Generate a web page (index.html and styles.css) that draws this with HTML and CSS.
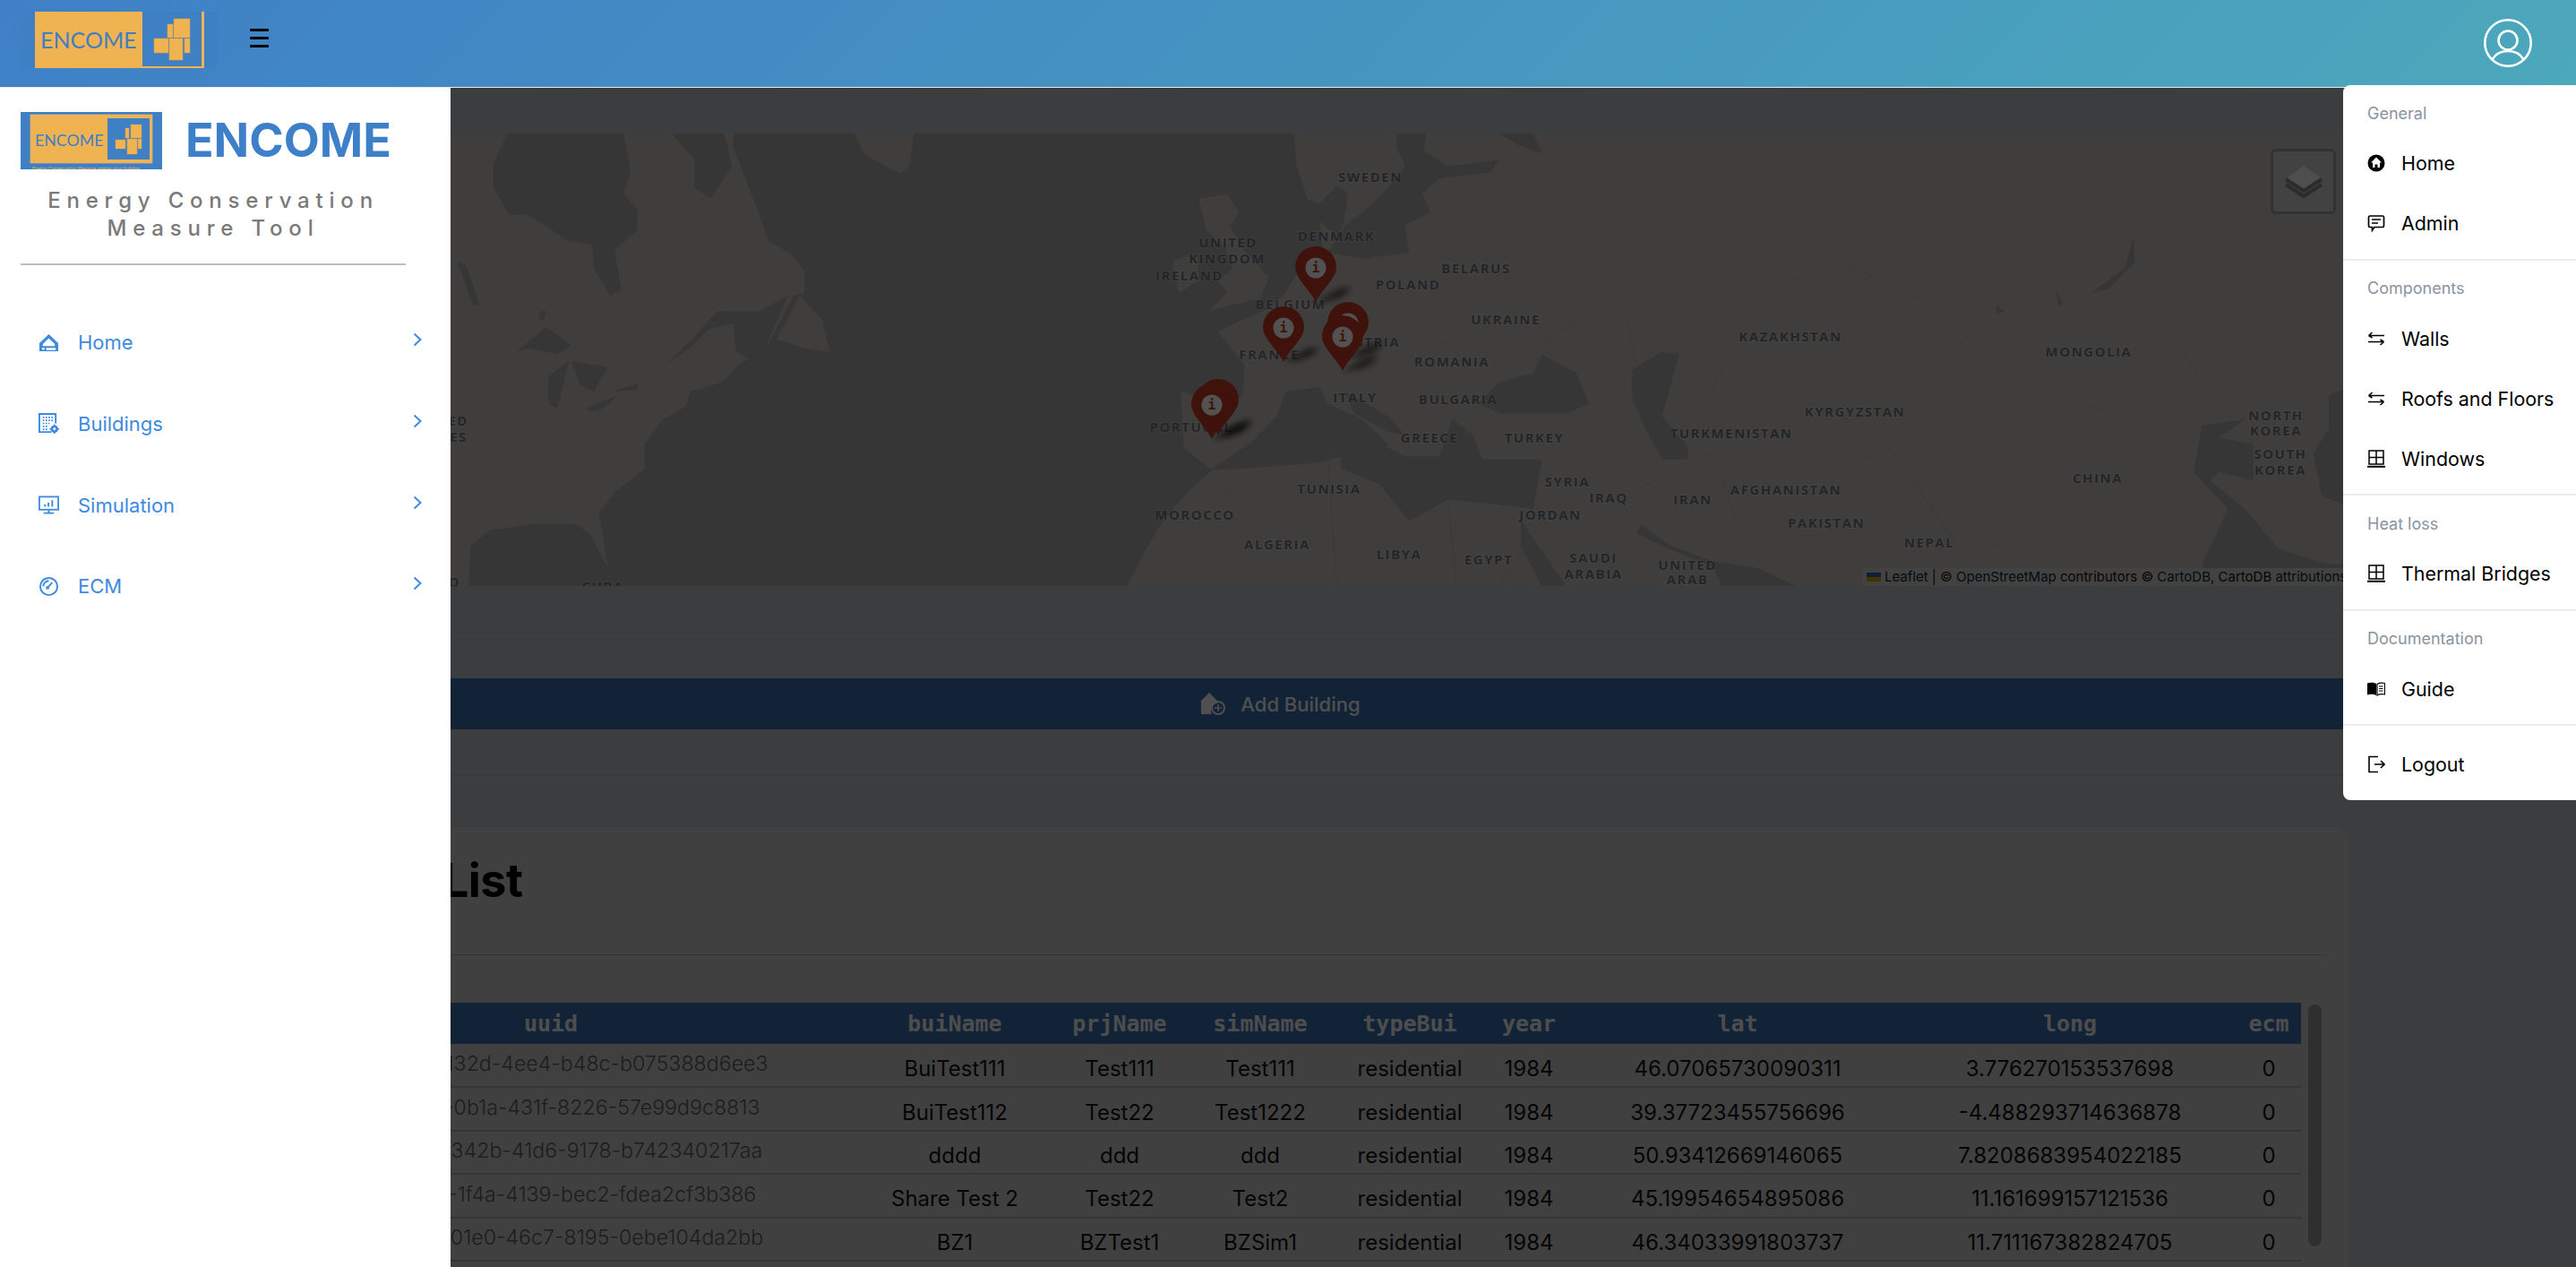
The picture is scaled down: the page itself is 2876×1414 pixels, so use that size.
FILE: index.html
```html
<!DOCTYPE html>
<html lang="en">
<head>
<meta charset="utf-8">
<title>ENCOME</title>
<link rel="stylesheet" href="styles.css">
</head>
<body>
<header class="topbar">
  <div class="topbar-left">
    <svg class="top-logo" viewBox="0 0 220 63">
      <rect width="220" height="63" fill="#3f7fc4"/>
      <rect x="16" width="189" height="63" fill="#f0b351"/>
      <rect x="136" width="66" height="61" fill="#3f7fc4"/>
      <text x="22" y="41" class="top-logo-text">ENCOME</text>
      <g fill="#f0b351" stroke="#d9a34f" stroke-width=".5">
        <rect x="171" y="8" width="18" height="21"/><rect x="164" y="14" width="6" height="15"/><rect x="149" y="30" width="16" height="16"/><rect x="166" y="30" width="15" height="24"/><rect x="183" y="30" width="6" height="16"/>
      </g>
    </svg>
    <div class="burger"><span></span><span></span><span></span></div>
  </div>
  <svg class="avatar" viewBox="0 0 56 56" fill="none" stroke="#fff" stroke-width="2.6">
    <circle cx="28" cy="28" r="25.7"/><circle cx="28" cy="25" r="10.5"/><path d="M10.5 46.5C14 40 20 37 28 37s14 3 17.5 9.5"/>
  </svg>
</header>

<main class="page">
  <section class="map">
    <svg class="map-svg" viewBox="24 149 2598 505" preserveAspectRatio="none">
      <defs>
        <filter id="soft" x="-30%" y="-30%" width="160%" height="160%"><feGaussianBlur stdDeviation="3.5"/></filter>
        <g id="pin">
          <path d="M23 62C36 56 48 44 62 46 58 56 40 62 23 62Z" fill="#000" opacity=".6" filter="url(#soft)"/>
          <path d="M23 62C17 49 0 36 0 23A23 23 0 0 1 46 23C46 36 29 49 23 62Z" fill="#c53b26"/>
          <circle cx="23" cy="24" r="11.5" fill="#fff"/>
          <text x="23" y="29" class="pin-i">i</text>
        </g>
      </defs>
      <rect x="24" y="149" width="2598" height="505" class="water"/>
      <g transform="translate(500 120) scale(.5102 .3445)">
        <path class="land" d="M-600 84H130L100 180 100 260 135 350 170 345 220 390 265 435 315 445 320 520 355 610 380 590 365 460 415 400 415 330 385 280 400 210 385 84H490L540 170 540 260 575 295 622 190 605 84H625L625 130 680 340 700 430 755 480 780 530 780 600 730 620 755 610 700 770 640 830 600 890 530 920 520 970 470 1010 430 1090 430 1170 370 1240 330 1310 350 1490 310 1380 280 1350 180 1350 90 1370 50 1420 45 1550H-600Z"/>
        <path class="land" d="M890 84H1020L1010 190 990 215 910 150Z"/>
        <path class="water" d="M590 660 680 660 745 610 700 760 680 830 630 790 625 700 570 720 530 780 480 830 540 740Z"/>
        <path class="land" d="M770 610 820 690 835 790 780 780 720 750Z"/>
        <path class="water" d="M150 790 215 710 270 770 240 800 180 780ZM220 870 265 820 240 975 220 960ZM270 820 350 840 320 920 290 900ZM300 975 370 935 340 975 310 985ZM365 915 415 895 415 915 370 920ZM20 500 40 510 70 640 55 640ZM200 660 215 660 210 690 200 685Z"/>
        <path class="border" d="M5 705H90L150 745M10 900 70 950 100 1060 175 1080 195 1135 155 1300"/>
      </g>
      <path class="land" d="M1445 149H2640V654H1258L1280 612 1296 585 1325 550 1353 525 1345 518 1322 500 1318 437 1345 445 1387 443 1390 407 1360 370 1387 357 1415 345 1433 330 1447 307 1477 280 1473 247 1493 263 1500 250 1505 215 1493 207 1473 227 1460 223 1447 183Z"/>
      <g transform="translate(1260 150) scale(.3333)">
        <path class="land" d="M235 215 330 200 370 260 340 310 390 390 470 480 440 550 350 570 270 590 330 530 300 490 350 450 325 380 260 320Z"/>
        <path class="land" d="M150 420 230 400 235 490 170 530 150 470Z"/>
      </g>
      <g transform="translate(1100 120) scale(.9566 .3445)">
        <path class="water" d="M480 84H515L512 140 540 190 600 170 590 210 530 230 510 280 520 340 490 380 495 470 440 490 400 470 420 380 440 340 470 260 490 190 480 130ZM600 84H640L650 150 620 120Z"/>
        <path class="water" d="M575 960 600 890 640 860 650 800 690 860 705 960 680 990 600 990Z"/>
        <path class="water" d="M755 850 790 790 810 800 800 900 790 1000 820 1100 820 1140 790 1140 770 1040 755 940Z"/>
        <path class="water" d="M262 1175 310 1085 340 1000 350 920 390 905 400 960 440 1010 470 1090 455 1140 420 1130 390 1150 300 1170Z"/>
        <path class="water" d="M420 920 470 1000 490 1060 470 1050 430 990Z"/>
        <path class="water" d="M415 1135 470 1100 490 1130 530 1130 545 1010 570 1060 580 1140 650 1140 640 1300 540 1270 495 1340 460 1220 415 1170Z"/>
        <path class="water" d="M625 1330 640 1400 680 1555 650 1555 625 1420ZM765 1350 800 1420 850 1470 900 1490 950 1555 860 1555 850 1490 790 1420 760 1380Z"/>
        <path class="water" d="M1340 420 1330 520 1290 600 1310 590 1342 500ZM1250 590 1258 640 1252 640ZM1180 640 1190 660 1180 670Z"/>
        <path class="water" d="M1420 1030 1470 1010 1440 1070 1480 1090 1480 1210 1440 1180 1430 1210 1470 1300 1510 1430 1568 1480 1700 1480 1700 1560H1430L1420 1480 1450 1300 1410 1180Z"/>
        <path class="water" d="M1568 930 1700 800V1400L1560 1260 1550 1120 1568 1040Z"/>
        <path class="border" d="M440 490 530 480 620 560 690 690 640 790M330 800 420 790 500 790 570 740M750 700 800 590 890 640 990 490 1120 660 1250 590 1410 710M750 700 760 830M860 850 840 960 930 920 1040 950 1180 680M1170 780 1300 980 1420 890 1400 800M1000 1000 1060 1120 1130 1400 1230 1440M760 1240 840 1120 880 1180 960 1170 1040 1130M860 1200 880 1380M240 1290 400 1130M400 1130 410 1550M540 1270 550 1550M650 1340 600 1550"/>
      </g>
      <g class="map-labels">
        <text x="1530" y="203">SWEDEN</text><text x="1492" y="269">DENMARK</text><text x="1371" y="276">UNITED</text><text x="1370" y="294">KINGDOM</text><text x="1328" y="313">IRELAND</text><text x="1648" y="305">BELARUS</text><text x="1572" y="323">POLAND</text><text x="1441" y="345">BELGIUM</text><text x="1681" y="362">UKRAINE</text><text x="1417" y="401">FRANCE</text><text x="1526" y="387">AUSTRIA</text><text x="1621" y="409">ROMANIA</text><text x="1999" y="381">KAZAKHSTAN</text><text x="2332" y="398">MONGOLIA</text><text x="1513" y="449">ITALY</text><text x="1628" y="451">BULGARIA</text><text x="2071" y="465">KYRGYZSTAN</text><text x="1933" y="489">TURKMENISTAN</text><text x="1330" y="482">PORTUGAL</text><text x="1596" y="494">GREECE</text><text x="1713" y="494">TURKEY</text><text x="2541" y="469">NORTH</text><text x="2541" y="486">KOREA</text><text x="2546" y="512">SOUTH</text><text x="2546" y="530">KOREA</text><text x="2342" y="539">CHINA</text><text x="1750" y="543">SYRIA</text><text x="1484" y="551">TUNISIA</text><text x="1796" y="561">IRAQ</text><text x="1890" y="563">IRAN</text><text x="1994" y="552">AFGHANISTAN</text><text x="1731" y="580">JORDAN</text><text x="1334" y="580">MOROCCO</text><text x="2039" y="589">PAKISTAN</text><text x="2154" y="611">NEPAL</text><text x="1426" y="613">ALGERIA</text><text x="1562" y="624">LIBYA</text><text x="1662" y="630">EGYPT</text><text x="1779" y="628">SAUDI</text><text x="1779" y="646">ARABIA</text><text x="1884" y="636">UNITED</text><text x="1884" y="652">ARAB</text><text x="490" y="475">UNITED</text><text x="491" y="493">STATES</text><text x="480" y="655">MEXICO</text><text x="673" y="660">CUBA</text>
      </g>
      <use href="#pin" x="1446" y="275"/>
      <use href="#pin" x="1410" y="342"/>
      <use href="#pin" x="1482" y="337"/>
      <use href="#pin" x="1476" y="352"/>
      <use href="#pin" x="1337" y="423"/>
      <use href="#pin" x="1330" y="428"/>
    </svg>
    <div class="layers-btn">
      <svg viewBox="0 0 44 44"><path d="M22 4 42 18 22 31 2 18Z" fill="#f2f2f2"/><path d="M2 25 22 38 42 25" fill="none" stroke="#8a8a8a" stroke-width="4"/><path d="M2 19 22 32 42 19" fill="none" stroke="#8a8a8a" stroke-width="4"/></svg>
    </div>
    <div class="attribution"><span class="flag"></span><a>Leaflet</a> | © <a>OpenStreetMap</a> contributors © <a>CartoDB</a>, CartoDB <a>attributions</a></div>
  </section>

  <hr class="rule">
  <div class="add-bar">
    <svg class="add-icon" viewBox="0 0 27 25"><path d="M9 0 18 9V12A8 8 0 0 0 12 24H0V9Z" fill="currentColor"/><circle cx="19" cy="17" r="7" fill="none" stroke="currentColor" stroke-width="2"/><path d="M19 13V21M15 17H23" stroke="currentColor" stroke-width="1.6"/></svg>
    <span>Add Building</span>
  </div>
  <hr class="rule rule-low">

  <section class="card">
    <h1 class="card-title">Building List</h1>
    <hr class="card-rule">
    <div class="table-wrap">
      <table class="data">
        <colgroup><col class="c0"><col class="c1"><col class="c2"><col class="c3"><col class="c4"><col class="c5"><col class="c6"><col class="c7"><col class="c8"><col class="c9"></colgroup>
        <thead><tr><th></th><th>uuid</th><th>buiName</th><th>prjName</th><th>simName</th><th>typeBui</th><th>year</th><th>lat</th><th>long</th><th>ecm</th></tr></thead>
        <tbody>
          <tr><td>1</td><td class="uuid">00000000-132d-4ee4-b48c-b075388d6ee3</td><td>BuiTest111</td><td>Test111</td><td>Test111</td><td>residential</td><td>1984</td><td>46.07065730090311</td><td>3.776270153537698</td><td>0</td></tr>
          <tr><td>2</td><td class="uuid">00000000-0b1a-431f-8226-57e99d9c8813</td><td>BuiTest112</td><td>Test22</td><td>Test1222</td><td>residential</td><td>1984</td><td>39.37723455756696</td><td>-4.488293714636878</td><td>0</td></tr>
          <tr><td>3</td><td class="uuid">00000000-342b-41d6-9178-b742340217aa</td><td>dddd</td><td>ddd</td><td>ddd</td><td>residential</td><td>1984</td><td>50.93412669146065</td><td>7.8208683954022185</td><td>0</td></tr>
          <tr><td>4</td><td class="uuid">00000000-1f4a-4139-bec2-fdea2cf3b386</td><td>Share Test 2</td><td>Test22</td><td>Test2</td><td>residential</td><td>1984</td><td>45.19954654895086</td><td>11.161699157121536</td><td>0</td></tr>
          <tr><td>5</td><td class="uuid">00000000-01e0-46c7-8195-0ebe104da2bb</td><td>BZ1</td><td>BZTest1</td><td>BZSim1</td><td>residential</td><td>1984</td><td>46.34033991803737</td><td>11.711167382824705</td><td>0</td></tr>
        </tbody>
      </table>
      <div class="scroll-thumb"></div>
    </div>
  </section>
</main>

<div class="dim"></div>

<aside class="sidebar">
  <div class="brand">
    <svg class="side-logo" viewBox="0 0 158 64">
      <rect width="158" height="64" fill="#3f7fc4"/>
      <rect x="11" y="3" width="136" height="54" fill="#f0b351" stroke="#d9b27a" stroke-width=".8"/>
      <rect x="97" y="7" width="47" height="46" fill="#3f7fc4"/>
      <text x="16" y="38" class="side-logo-text">ENCOME</text>
      <g fill="#f0b351" stroke="#d9a34f" stroke-width=".4">
        <rect x="123" y="14" width="12" height="15"/><rect x="117" y="18" width="4" height="11"/><rect x="106" y="31" width="11" height="10"/><rect x="119" y="30" width="11" height="17"/><rect x="131" y="30" width="4" height="11"/>
      </g>
      <text x="13" y="65" class="side-logo-tiny">Energy Conservation Measure makes your building</text>
    </svg>
    <div class="brand-name">ENCOME</div>
  </div>
  <p class="brand-sub">Energy Conservation Measure Tool</p>
  <hr class="side-rule">
  <nav class="side-nav">
    <a class="side-item">
      <span class="side-icon"><svg viewBox="0 0 24 24"><path d="M12 2 23 12.500V22H1V12.500ZM12 6.800 5 13.500V16H19V13.500ZM7 18 4 18V20H7ZM9 18V20.500H20V18Z" fill="currentColor" fill-rule="evenodd"/></svg></span>
      <span class="side-text">Home</span>
      <svg class="chev" viewBox="0 0 10 16"><path d="M1.500 1.500 8.500 8 1.500 14.500"/></svg>
    </a>
    <a class="side-item">
      <span class="side-icon"><svg viewBox="0 0 24 24" fill="none" stroke="currentColor"><path d="M15 22H1V1H20V12" stroke-width="2"/><path d="M5 5H17M5 8.500H17M5 12H13M5 15.500H11M5 19H11" stroke-width="1.800" stroke-dasharray="1.800 1.500"/><circle cx="18.500" cy="18.500" r="3" stroke-width="3"/><path d="M18.500 13V24M13 18.500H24" stroke-width="1.500" stroke-dasharray="2 7"/></svg></span>
      <span class="side-text">Buildings</span>
      <svg class="chev" viewBox="0 0 10 16"><path d="M1.500 1.500 8.500 8 1.500 14.500"/></svg>
    </a>
    <a class="side-item">
      <span class="side-icon"><svg viewBox="0 0 24 24" fill="none" stroke="currentColor" stroke-width="1.900"><rect x="1" y="2.500" width="22" height="15"/><path d="M12 17.500V21M6 21.500H18M7.500 14V11.500M11.500 14V9.500M16 14V6.500" stroke-width="2"/></svg></span>
      <span class="side-text">Simulation</span>
      <svg class="chev" viewBox="0 0 10 16"><path d="M1.500 1.500 8.500 8 1.500 14.500"/></svg>
    </a>
    <a class="side-item">
      <span class="side-icon"><svg viewBox="0 0 24 24" fill="none" stroke="currentColor" stroke-width="2"><circle cx="12" cy="12" r="10"/><path d="M5.500 12A6.500 6.500 0 0 1 12 5.500M11 13 16 7.500" stroke-width="2"/><circle cx="10.500" cy="13.500" r="2" fill="currentColor" stroke="none"/></svg></span>
      <span class="side-text">ECM</span>
      <svg class="chev" viewBox="0 0 10 16"><path d="M1.500 1.500 8.500 8 1.500 14.500"/></svg>
    </a>
  </nav>
</aside>

<div class="menu">
  <div class="menu-group">
    <div class="menu-label">General</div>
    <a class="menu-item"><svg viewBox="0 0 20 20"><circle cx="10" cy="10" r="9.500" fill="#000"/><path d="M10 3.500 16 9.500H14V15H11.500V11.500H8.500V15H6V9.500H4Z" fill="#fff"/></svg><span>Home</span></a>
    <a class="menu-item"><svg viewBox="0 0 20 20" fill="none" stroke="#000" stroke-width="1.700"><path d="M3 2H17A1.500 1.500 0 0 1 18.500 3.500V13A1.500 1.500 0 0 1 17 14.500H8L5.500 18V14.500H3A1.500 1.500 0 0 1 1.500 13V3.500A1.500 1.500 0 0 1 3 2Z"/><path d="M5 6H15M5 10H12"/></svg><span>Admin</span></a>
  </div>
  <div class="menu-group">
    <div class="menu-label">Components</div>
    <a class="menu-item"><svg viewBox="0 0 20 20" fill="none" stroke="#000" stroke-width="1.500"><path d="M1.500 6.500H19M1.500 6.500 5.500 3M1.500 6.500 5.500 9M1 13.500H18.500M18.500 13.500 14.500 11M18.500 13.500 14.500 17"/></svg><span>Walls</span></a>
    <a class="menu-item"><svg viewBox="0 0 20 20" fill="none" stroke="#000" stroke-width="1.500"><path d="M1.500 6.500H19M1.500 6.500 5.500 3M1.500 6.500 5.500 9M1 13.500H18.500M18.500 13.500 14.500 11M18.500 13.500 14.500 17"/></svg><span>Roofs and Floors</span></a>
    <a class="menu-item"><svg viewBox="0 0 20 20" fill="none" stroke="#000" stroke-width="1.500"><path d="M2 1H18V16H2ZM10 1V16M2 8.500H18"/><path d="M0 18.800H20" stroke-width="2"/></svg><span>Windows</span></a>
  </div>
  <div class="menu-group">
    <div class="menu-label">Heat loss</div>
    <a class="menu-item"><svg viewBox="0 0 20 20" fill="none" stroke="#000" stroke-width="1.500"><path d="M2 1H18V16H2ZM10 1V16M2 8.500H18"/><path d="M0 18.800H20" stroke-width="2"/></svg><span>Thermal Bridges</span></a>
  </div>
  <div class="menu-group">
    <div class="menu-label">Documentation</div>
    <a class="menu-item"><svg viewBox="0 0 20 20"><path d="M0 3.500C3 2.500 7 2.500 10 4V17C7 15.500 3 15.500 0 16.500Z" fill="#000"/><path d="M11 4.500C13.500 3 16.500 3 19.500 3.500V16C16.500 15.500 13.500 15.500 11 17Z" fill="none" stroke="#000" stroke-width="1.200"/><path d="M13 7H17.500M13 9.500H17.500M13 12H17.500" stroke="#000" stroke-width="1.200"/></svg><span>Guide</span></a>
  </div>
  <div class="menu-group menu-group-last">
    <a class="menu-item"><svg viewBox="0 0 20 20" fill="none" stroke="#000" stroke-width="1.600"><path d="M12 1.500H2V18.500H12M8 10H19M15 6 19 10 15 14"/></svg><span>Logout</span></a>
  </div>
</div>
</body>
</html>
```

FILE: styles.css
```css
* { box-sizing: border-box; }
html, body { margin: 0; height: 1414px; overflow: hidden; }
body { font-family: Inter, "Liberation Sans", sans-serif; background: #bcbfc5; position: relative; color: #000; }

/* top bar */
.topbar { position: relative; z-index: 30; height: 98px; display: flex; justify-content: space-between; padding: 13px 48px 0 23px;
  background: linear-gradient(135deg, #3f80c7 0%, #4ca8bb 100%); border-bottom: 1px solid #e8eaee; }
.topbar-left { display: flex; align-items: flex-start; }
.top-logo { width: 220px; height: 63px; display: block; }
.top-logo-text { font-family: Lato, sans-serif; font-size: 25px; fill: #3f7fc4; }
.burger { margin: 19px 0 0 36px; width: 21px; display: flex; flex-direction: column; gap: 6.500px; }
.burger span { display: block; height: 2.500px; background: #000; border-radius: 1px; }
.avatar { width: 56px; height: 56px; margin-top: 7px; }

/* page under the scrim */
.page { padding: 51px 254px 0 24px; }
.map { position: relative; height: 505px; overflow: hidden; }
.map-svg { width: 100%; height: 100%; display: block; }
.water { fill: #a6a9a6; }
.land { fill: #c5c2bc; }
.border { fill: none; stroke: #b4b2ac; stroke-width: 1.200; }
.map-labels text { font-family: "Open Sans", sans-serif; font-weight: 700; font-size: 15px; text-anchor: middle; letter-spacing: 1.500px; fill: #6e747e; stroke: rgba(255,255,255,.25); stroke-width: 2px; paint-order: stroke; }
.pin-i { font-family: "DejaVu Sans Mono", monospace; font-weight: 700; font-size: 15px; text-anchor: middle; fill: #c53b26; }
.layers-btn { position: absolute; top: 17px; right: 14px; width: 73px; height: 73px; background: #cdcdcd; border: 3px solid #9c9c9c; border-radius: 6px; display: flex; align-items: center; justify-content: center; }
.layers-btn svg { width: 44px; height: 44px; }
.attribution { position: absolute; right: 0; bottom: 0; height: 20px; padding: 0 4px 0 4px; width: 542px; background: #cfcdc8; font-size: 15px; line-height: 20px; color: #111; white-space: nowrap; overflow: hidden; }
.attribution a { color: #002d40; }
.flag { display: inline-block; width: 16px; height: 10px; margin-right: 4px; background: linear-gradient(#3a5fae 50%, #c9a800 50%); }

.rule { border: 0; border-top: 1px solid #acacac; margin: 51px 0 0; }
.rule-low { margin-top: 51px; }
.add-bar { margin-top: 51px; height: 57px; background: #386daf; color: #f4f4f4; display: flex; align-items: center; justify-content: center; gap: 17px; font-size: 22px; font-weight: 500; padding-left: 214px; }
.add-icon { width: 27px; height: 25px; }

.card { margin-top: 57px; height: 560px; background: #c8c8c8; border-radius: 14px; padding: 0 24px; position: relative; }
.card-title { margin: 0 0 0 231px; height: 142px; font-size: 52px; font-weight: 700; line-height: 120px; letter-spacing: -.5px; color: #000; white-space: nowrap; }
.card-rule { border: 0; border-top: 1px solid #a4a4a4; margin: 0; }
.table-wrap { margin-top: 53px; position: relative; }
.data { width: 2521px; table-layout: fixed; border-collapse: collapse; }
.c0 { width: 225px; } .c1 { width: 684px; } .c2 { width: 218px; } .c3 { width: 150px; } .c4 { width: 164px; }
.c5 { width: 170px; } .c6 { width: 96px; } .c7 { width: 370px; } .c8 { width: 372px; } .c9 { width: 72px; }
.data th { height: 46px; padding: 0; background: #386daf; color: #eee; font-family: "DejaVu Sans Mono", monospace; font-size: 25px; font-weight: 700; text-align: center; }
.data td { height: 48.400px; padding: 7px 0 0; text-align: center; font-size: 24px; color: #111; border-bottom: 2px solid #a4a4a4; white-space: nowrap; }
.data td.uuid { font-size: 23.200px; font-weight: 300; color: #5c5c5c; padding: 0 0 3px; }
.scroll-thumb { position: absolute; left: 2529px; top: 2px; width: 15px; height: 270px; background: #939393; border-radius: 8px; }

.dim { position: fixed; inset: 0; z-index: 10; background: rgba(0,0,0,.68); }

/* sidebar drawer */
.sidebar { position: fixed; z-index: 20; top: 98px; left: 0; bottom: 0; width: 503px; background: #fff; padding: 27px 0 0 23px; }
.brand { display: flex; align-items: center; gap: 26px; }
.side-logo { width: 158px; height: 64px; display: block; }
.side-logo-text { font-family: Lato, sans-serif; font-size: 17.800px; fill: #3f7fc4; }
.side-logo-tiny { font-size: 5px; fill: #f0b351; }
.brand-name { font-size: 52px; font-weight: 700; color: #3d7fc9; line-height: 64px; }
.brand-sub { width: 430px; margin: 19px 0 0; font-size: 24px; font-weight: 500; line-height: 31px; letter-spacing: 6.800px; text-align: center; color: #7a7a7a; }
.side-rule { width: 430px; margin: 24px 0 0; border: 0; border-top: 2px solid #bdbdbd; }
.side-nav { margin-top: 41px; display: flex; flex-direction: column; }
.side-item { height: 90.670px; display: flex; align-items: center; padding-left: 20px; color: #3d8ae0; }
.side-icon { width: 44px; display: flex; }
.side-icon svg { width: 23px; height: 23px; }
.side-text { font-size: 22px; width: 374px; }
.chev { width: 10px; height: 16px; fill: none; stroke: currentColor; stroke-width: 2; margin-top: -6px; }

/* account dropdown */
.menu { position: fixed; z-index: 40; top: 95px; right: 0; width: 260px; height: 798px; background: #fff; border-radius: 8px 0 0 8px; }
.menu-group { padding: 8.500px 0 6px; border-bottom: 2px solid #ececf0; }
.menu-group-last { border-bottom: 0; padding-top: 9.500px; }
.menu-label { height: 45px; line-height: 45px; padding-left: 27px; font-size: 18px; color: #8b93a1; }
.menu-item { height: 67px; display: flex; align-items: center; padding-left: 27px; font-size: 21.400px; color: #000; white-space: nowrap; }
.menu-item svg { width: 20px; height: 20px; margin-right: 18px; flex: none; }
```
